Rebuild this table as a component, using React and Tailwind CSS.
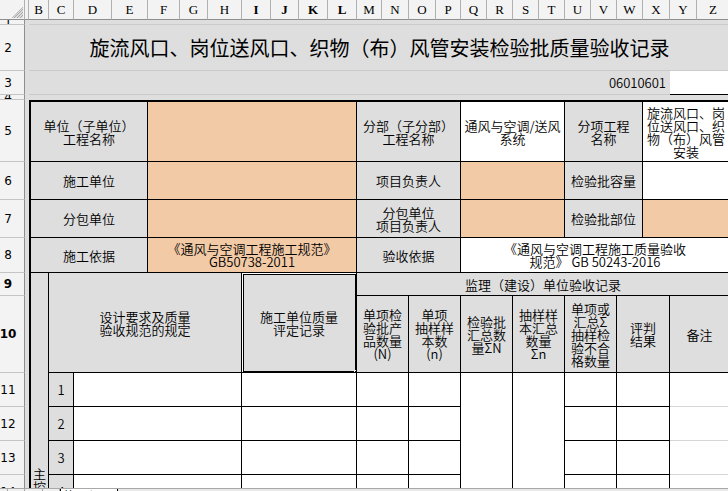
import React from "react";

const CELL =
  "flex items-center justify-center text-center overflow-hidden border-r border-b border-black text-[13px] leading-[13px] text-black";
const GRAY = "bg-[#dedede]";
const ORANGE = "bg-[#f2caa6]";
const WHITE = "bg-white";

const colHeads = [
  ["B", false], ["C", false], ["D", false], ["E", false], ["F", false], ["G", false],
  ["H", false], ["I", true], ["J", true], ["K", true], ["L", true], ["M", false],
  ["N", false], ["O", false], ["P", false], ["Q", false], ["R", false], ["S", false],
  ["T", false], ["U", false], ["V", false], ["W", false], ["X", false], ["Y", false], ["Z", false],
];

const rowHeads = [
  ["1", "row-[2/3]", false], ["2", "row-[3/4]", false], ["3", "row-[4/5]", false],
  ["4", "row-[5/6]", false], ["5", "row-[6/7]", false], ["6", "row-[7/8]", false],
  ["7", "row-[8/9]", false], ["8", "row-[9/10]", false], ["9", "row-[10/11]", true],
  ["10", "row-[11/12]", true], ["11", "row-[12/13]", false], ["12", "row-[13/14]", false],
  ["13", "row-[14/15]", false], ["14", "row-[15/16]", false], ["15", "row-[16/17]", false],
  ["16", "row-[17/18]", false], ["17", "row-[18/19]", false], ["18", "row-[19/20]", false],
  ["19", "row-[20/21]", false], ["20", "row-[21/22]", false],
];

const bodyRows = [
  ["1", "row-[12/13]"], ["2", "row-[13/14]"], ["3", "row-[14/15]"], ["4", "row-[15/16]"],
  ["5", "row-[16/17]"], ["6", "row-[17/18]"], ["7", "row-[18/19]"], ["8", "row-[19/20]"],
  ["9", "row-[20/21]"], ["10", "row-[21/22]"],
];

function Corner() {
  return (
    <div className="row-[1/2] col-[1/2] bg-[#f3f3f3] border-r border-b border-[#b0b0b0] border-b-[#8e8e8e] flex items-end justify-end pr-[1px] pb-[1px]">
      <svg width="11" height="11" viewBox="0 0 11 11">
        <polygon points="11,0 11,11 0,11" fill="#dcdcdc" />
        <line x1="11" y1="2" x2="2" y2="11" stroke="#a8a8a8" strokeWidth="1" />
        <line x1="11" y1="5" x2="5" y2="11" stroke="#a8a8a8" strokeWidth="1" />
        <line x1="11" y1="8" x2="8" y2="11" stroke="#a8a8a8" strokeWidth="1" />
        <line x1="11" y1="0" x2="0" y2="11" stroke="#b8b8b8" strokeWidth="1" />
      </svg>
    </div>
  );
}

export default function App() {
  return (
    <div className="w-[728px] h-[491px] overflow-hidden bg-white flex flex-col font-['Noto_Sans_CJK_SC',sans-serif] font-[350] text-black">
      <div className="h-[488px] shrink-0 overflow-hidden">
        <div className="grid w-max bg-[#dedede] grid-cols-[25px_4px_20px_25px_38px_36px_32px_28px_34px_29px_28px_29px_29px_25px_27px_27px_25px_26px_26px_26px_26px_26px_26px_26px_27px_27px_33px] grid-rows-[20px_5px_46px_24px_5px_62px_38px_38px_35px_23px_77px_34px_34px_34px_34px_34px_34px_34px_34px_34px_34px]">
          {/* column header */}
          <Corner />
          <div className="row-[1/2] col-[2/3] bg-[#f3f3f3] border-r border-b border-[#b0b0b0] border-b-[#8e8e8e]" />
          {colHeads.map(([l, b]) => (
            <div
              key={l}
              className={`row-[1/2] flex items-center justify-center bg-[#f3f3f3] border-r border-b border-[#b0b0b0] border-b-[#8e8e8e] text-[13px] leading-[13px] font-['Liberation_Serif',serif] ${b ? "font-bold" : "font-normal"}`}
            >
              {l}
            </div>
          ))}

          {/* row header */}
          {rowHeads.map(([n, r, b]) => (
            <div
              key={n}
              className={`col-[1/2] ${r} flex items-center justify-center pr-[8px] overflow-hidden bg-[#f3f3f3] border-b border-r border-[#c4c4c4] border-r-[#8e8e8e] text-[12px] leading-[12px] font-['DejaVu_Sans',sans-serif] ${b ? "font-bold" : "font-normal"}`}
            >
              {n}
            </div>
          ))}

          {/* rows 1-4 */}
          <div className="col-[3/28] row-[2/3] border-b border-[#cbcbcb]" />
          <div className="col-[3/28] row-[3/4] flex items-center justify-center border-b border-[#cbcbcb] text-[20px] leading-[20px] font-normal">
            旋流风口、岗位送风口、织物（布）风管安装检验批质量验收记录
          </div>
          <div className="col-[3/26] row-[4/5] flex items-center justify-end pr-[4px] border-b border-[#cbcbcb] text-[13px] leading-[13px]">
            06010601
          </div>
          <div className="col-[26/28] row-[4/5] bg-white border-b border-black" />

          {/* row 5 */}
          <div className={`col-[3/7] row-[6/7] border-l-2 border-t-2 ${CELL} ${GRAY}`}>
            单位（子单位）<br />工程名称
          </div>
          <div className={`col-[7/14] row-[6/7] border-t-2 ${CELL} ${ORANGE}`} />
          <div className={`col-[14/18] row-[6/7] border-t-2 ${CELL} ${GRAY}`}>
            分部（子分部）<br />工程名称
          </div>
          <div className={`col-[18/22] row-[6/7] border-t-2 ${CELL} ${WHITE}`}>
            通风与空调/送风<br />系统
          </div>
          <div className={`col-[22/25] row-[6/7] border-t-2 ${CELL} ${GRAY}`}>
            分项工程<br />名称
          </div>
          <div className={`col-[25/28] row-[6/7] border-t-2 ${CELL} ${WHITE}`}>
            旋流风口、岗<br />位送风口、织<br />物（布）风管<br />安装
          </div>

          {/* row 6 */}
          <div className={`col-[3/7] row-[7/8] border-l-2 ${CELL} ${GRAY}`}>施工单位</div>
          <div className={`col-[7/14] row-[7/8] ${CELL} ${ORANGE}`} />
          <div className={`col-[14/18] row-[7/8] ${CELL} ${GRAY}`}>项目负责人</div>
          <div className={`col-[18/22] row-[7/8] ${CELL} ${ORANGE}`} />
          <div className={`col-[22/25] row-[7/8] ${CELL} ${GRAY}`}>检验批容量</div>
          <div className={`col-[25/28] row-[7/8] ${CELL} ${WHITE}`} />

          {/* row 7 */}
          <div className={`col-[3/7] row-[8/9] border-l-2 ${CELL} ${GRAY}`}>分包单位</div>
          <div className={`col-[7/14] row-[8/9] ${CELL} ${ORANGE}`} />
          <div className={`col-[14/18] row-[8/9] ${CELL} ${GRAY}`}>
            分包单位<br />项目负责人
          </div>
          <div className={`col-[18/22] row-[8/9] ${CELL} ${ORANGE}`} />
          <div className={`col-[22/25] row-[8/9] ${CELL} ${GRAY}`}>检验批部位</div>
          <div className={`col-[25/28] row-[8/9] ${CELL} ${ORANGE}`} />

          {/* row 8 */}
          <div className={`col-[3/7] row-[9/10] border-l-2 ${CELL} ${GRAY}`}>施工依据</div>
          <div className={`col-[7/14] row-[9/10] ${CELL} ${ORANGE}`}>
            《通风与空调工程施工规范》<br />GB50738-2011
          </div>
          <div className={`col-[14/18] row-[9/10] ${CELL} ${GRAY}`}>验收依据</div>
          <div className={`col-[18/28] row-[9/10] ${CELL} ${WHITE}`}>
            《通风与空调工程施工质量验收<br />规范》 GB 50243-2016
          </div>

          {/* rows 9-10 */}
          <div className={`col-[3/4] row-[10/22] border-l-2 ${CELL} ${GRAY}`}>
            主<br />控<br />项<br />目
          </div>
          <div className={`col-[4/10] row-[10/12] ${CELL} ${GRAY}`}>
            设计要求及质量<br />验收规范的规定
          </div>
          <div className={`col-[10/14] row-[10/12] relative ${CELL} ${GRAY}`}>
            施工单位质量<br />评定记录
            <div className="pointer-events-none absolute left-[-1px] top-[-1px] right-[-2px] bottom-[-2px] border border-black shadow-[inset_0_0_0_1px_#ffffff,inset_0_0_0_2px_#000000]" />
            <div className="absolute right-[-4px] bottom-[-4px] w-[6px] h-[6px] bg-black border border-white" />
          </div>
          <div className={`col-[14/28] row-[10/11] ${CELL} ${GRAY}`}>
            监理（建设）单位验收记录
          </div>
          <div className={`col-[14/16] row-[11/12] ${CELL} ${GRAY}`}>
            单项检<br />验批产<br />品数量<br />(N)
          </div>
          <div className={`col-[16/18] row-[11/12] ${CELL} ${GRAY}`}>
            单项<br />抽样样<br />本数<br />(n)
          </div>
          <div className={`col-[18/20] row-[11/12] ${CELL} ${GRAY}`}>
            检验批<br />汇总数<br />量ΣN
          </div>
          <div className={`col-[20/22] row-[11/12] ${CELL} ${GRAY}`}>
            抽样样<br />本汇总<br />数量<br />Σn
          </div>
          <div className={`col-[22/24] row-[11/12] ${CELL} ${GRAY} leading-[12.5px]`}>
            单项或<br />汇总Σ<br />抽样检<br />验不合<br />格数量
          </div>
          <div className={`col-[24/26] row-[11/12] ${CELL} ${GRAY}`}>
            评判<br />结果
          </div>
          <div className={`col-[26/28] row-[11/12] ${CELL} ${GRAY}`}>备注</div>

          {/* body rows */}
          <div className={`col-[18/20] row-[12/22] ${CELL} ${WHITE}`} />
          <div className={`col-[20/22] row-[12/22] ${CELL} ${WHITE}`} />
          {bodyRows.map(([n, r]) => (
            <React.Fragment key={n}>
              <div className={`col-[4/5] ${r} ${CELL} ${GRAY}`}>{n}</div>
              <div className={`col-[5/10] ${r} ${CELL} ${WHITE}`} />
              <div className={`col-[10/14] ${r} ${CELL} ${WHITE}`} />
              <div className={`col-[14/16] ${r} ${CELL} ${WHITE}`} />
              <div className={`col-[16/18] ${r} ${CELL} ${WHITE}`} />
              <div className={`col-[22/24] ${r} ${CELL} ${WHITE}`} />
              <div className={`col-[24/26] ${r} ${CELL} ${WHITE}`} />
              <div className={`col-[26/28] ${r} bg-white border-b border-[#d6d6d6]`} />
            </React.Fragment>
          ))}
        </div>
      </div>

      {/* sheet tab bar */}
      <div className="h-[20px] shrink-0 flex bg-[#f0f0f0] border-t border-[#a8a8a8]">
        <div className="w-[8px] border-r border-[#a8a8a8]" />
        <div className="w-[17px] border-r border-[#a8a8a8]" />
        <div className="w-[18px] border-r border-[#a8a8a8]" />
        <div className="w-[17px] border-r border-[#a8a8a8]" />
        <div className="w-[58px] bg-white border-l border-r border-black flex justify-center text-[13px] leading-[13px] overflow-hidden">
          施工记录
        </div>
        <div className="flex-1 bg-[#e9e9e9]" />
      </div>
    </div>
  );
}
